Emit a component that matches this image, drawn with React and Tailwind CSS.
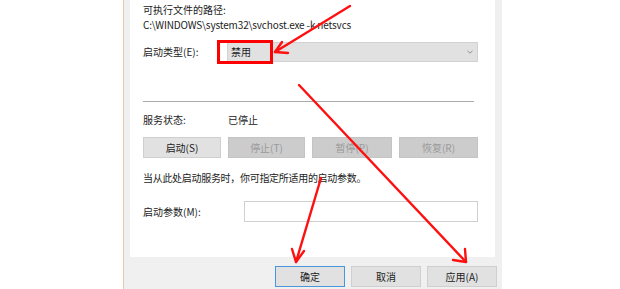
import React from "react";

const font = { fontFamily: '"Noto Sans CJK SC", "Noto Sans", sans-serif' };

function Btn({ children, disabled, primary, w = "w-[78px]" }) {
  return (
    <div
      className={
        "h-[21px] flex items-center justify-center text-[10px] border " +
        w +
        " " +
        (disabled
          ? "bg-[#cccccc] border-[#c4c4c4] text-[#9a9a9a]"
          : primary
          ? "bg-[#e1e1e1] border-[#4a96dc] text-[#222]"
          : "bg-[#e1e1e1] border-[#cfcfcf] text-[#222]")
      }
    >
      {children}
    </div>
  );
}

export default function App() {
  return (
    <div className="relative w-[620px] h-[289px] bg-white overflow-hidden flex" style={font}>
      <div className="w-[123px] shrink-0 bg-white" />
      <div className="w-[379px] shrink-0 h-full bg-[#f0f0f0] border-l border-[#e3c9ae] flex flex-col">
        <div className="ml-[6px] w-[365px] h-[257px] bg-white pl-[13px] flex flex-col text-[10px] text-[#222] leading-[14px]">
          <div className="mt-[3px]">可执行文件的路径:</div>
          <div className="mt-[1px] tracking-[-0.15px]">C:\WINDOWS\system32\svchost.exe -k netsvcs</div>
          <div className="mt-[10px] flex items-center">
            <div className="w-[84px]">启动类型(E):</div>
            <div className="w-[251px] h-[20px] bg-[#e1e1e1] border border-[#d2d2d2] flex items-center justify-between pl-[3px] pr-[4px]">
              <span>禁用</span>
              <svg width="6" height="4" viewBox="0 0 6 4">
                <path d="M0.5 0.8 L3 3.2 L5.5 0.8" fill="none" stroke="#8a8a8a" strokeWidth="0.9" />
              </svg>
            </div>
          </div>
          <div className="mt-[39px] w-[331px] h-px bg-[#ababab]" />
          <div className="mt-[11px] flex items-center">
            <div className="w-[85px]">服务状态:</div>
            <div>已停止</div>
          </div>
          <div className="mt-[10px] flex gap-[7px]">
            <Btn>启动(S)</Btn>
            <Btn disabled w="w-[77px]">停止(T)</Btn>
            <Btn disabled w="w-[80px]">暂停(P)</Btn>
            <Btn disabled w="w-[79px]">恢复(R)</Btn>
          </div>
          <div className="mt-[13px] tracking-[-0.3px]">当从此处启动服务时，你可指定所适用的启动参数。</div>
          <div className="mt-[16px] flex items-center">
            <div className="w-[101px]">启动参数(M):</div>
            <div className="w-[234px] h-[21px] bg-white border border-[#d0d0d0]" />
          </div>
        </div>
        <div className="ml-[151px] mt-[9px] flex gap-[6px]">
          <Btn primary w="w-[70px]">确定</Btn>
          <Btn w="w-[70px]">取消</Btn>
          <Btn w="w-[70px]">应用(A)</Btn>
        </div>
      </div>
      <div className="w-[7px] shrink-0" />

      {/* annotation: red box */}
      <div className="absolute left-[217px] top-[40px] w-[56px] h-[24px] border-[3px] border-[#ff0000]" />
      {/* annotation arrows */}
      <svg className="absolute left-0 top-0" width="620" height="289" viewBox="0 0 620 289">
        <g stroke="#ff1010" strokeWidth="2.4" fill="none" strokeLinecap="round" strokeLinejoin="round">
          <line x1="350" y1="6" x2="275" y2="52" />
          <path d="M282 42 L275 52 L288 53" />
          <line x1="299" y1="85" x2="466" y2="262" />
          <path d="M465 249 L466 262 L453 260" />
          <line x1="321" y1="178" x2="296" y2="262" />
          <path d="M292 249 L296 262 L304 251" />
        </g>
      </svg>
    </div>
  );
}
